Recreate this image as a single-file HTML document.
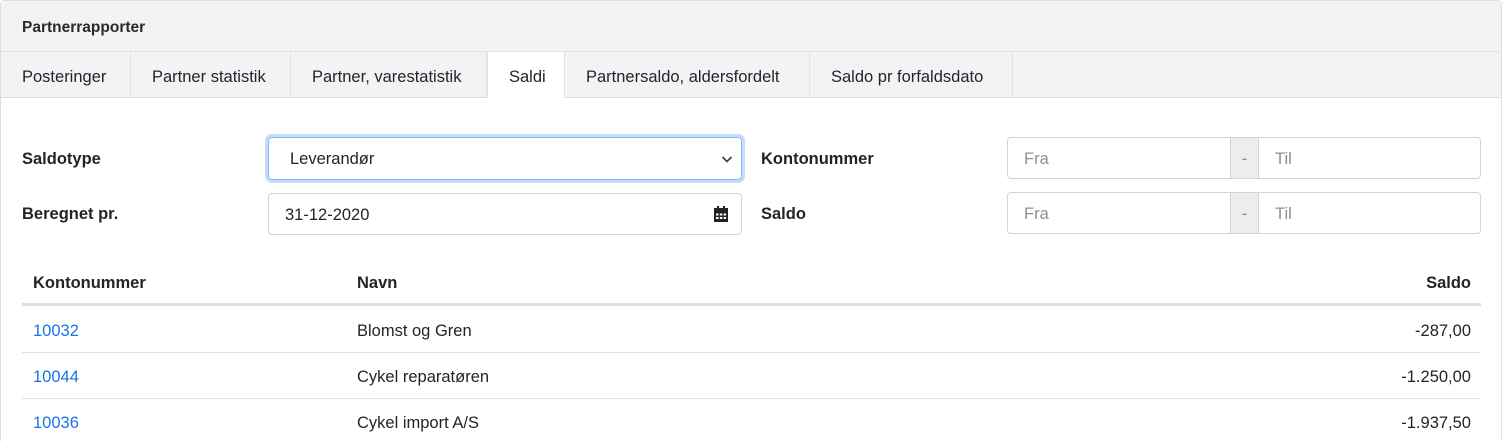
<!DOCTYPE html>
<html><head><meta charset="utf-8"><style>
*{box-sizing:border-box;margin:0;padding:0}
html,body{width:1505px;height:441px;overflow:hidden}
body{background:#fff;font-family:"Liberation Sans",sans-serif;font-size:16.5px;color:#212529;position:relative}
.a{position:absolute}
.card{left:0;top:0;width:1502px;height:460px;border:1px solid #dfdfdf;border-radius:4px}
.hdr{left:1px;top:1px;width:1500px;height:51px;background:#f2f3f5;border-bottom:1px solid #e2e2e2;font-size:15.5px;padding:18px 21px;font-weight:bold;color:#2a2a2a}
.tabs{left:1px;top:52px;width:1500px;height:46px;background:#f2f3f5;border-bottom:1px solid #dfdfdf}
.tab{position:absolute;top:0;height:46px;line-height:50px;padding-left:21px;border-right:1px solid #e3e3e3}
.lbl{font-weight:bold}
.inp{border:1px solid #ced4da;border-radius:4px;height:42px;line-height:43px;padding-left:16px}
.ph{color:#8a8f95}
.th{font-weight:bold;top:274px}
.ln{left:22px;width:1459px;height:1px;background:#dee2e6}
a{color:#1a73e8;text-decoration:none}
</style></head><body>
<div class="a card"></div>
<div class="a hdr">Partnerrapporter</div>
<div class="a tabs">
<div class="tab" style="left:0;width:130px">Posteringer</div>
<div class="tab" style="left:130px;width:160px">Partner statistik</div>
<div class="tab" style="left:290px;width:196px">Partner, varestatistik</div>
<div class="tab" style="left:486px;width:78px;background:#fff;height:46px;border-left:1px solid #e3e3e3">Saldi</div>
<div class="tab" style="left:564px;width:245px">Partnersaldo, aldersfordelt</div>
<div class="tab" style="left:809px;width:203px">Saldo pr forfaldsdato</div>
</div>

<div class="a lbl" style="left:22px;top:150px">Saldotype</div>
<div class="a lbl" style="left:22px;top:205px">Beregnet pr.</div>
<div class="a inp" style="left:268px;top:137px;width:474px;height:43px;border-color:#86b7fe;box-shadow:0 0 0 3px #c7dcfb;padding-left:21px">Leverandør
<svg class="a" style="right:8px;top:17px" width="12" height="9" viewBox="0 0 12 9"><path d="M1.5 2 L6 6.5 L10.5 2" fill="none" stroke="#343a40" stroke-width="1.6"/></svg></div>
<div class="a inp" style="left:268px;top:193px;width:474px">31-12-2020
<svg class="a" style="right:13px;top:12px" width="14" height="16" viewBox="0 0 14 16"><rect x="3" y="0" width="2" height="3" fill="#222"/><rect x="9" y="0" width="2" height="3" fill="#222"/><rect x="0" y="2" width="14" height="4" fill="#222"/><path d="M0 6h14v10H0z" fill="#222"/><g fill="#fff"><rect x="2" y="7.5" width="2.5" height="2"/><rect x="5.8" y="7.5" width="2.5" height="2"/><rect x="9.6" y="7.5" width="2.5" height="2"/><rect x="2" y="11" width="2.5" height="2"/><rect x="5.8" y="11" width="2.5" height="2"/><rect x="9.6" y="11" width="2.5" height="2"/></g></svg></div>

<div class="a lbl" style="left:761px;top:150px">Kontonummer</div>
<div class="a lbl" style="left:761px;top:205px">Saldo</div>

<div class="a inp ph" style="left:1007px;top:137px;width:224px;border-radius:4px 0 0 4px">Fra</div>
<div class="a inp ph" style="left:1230px;top:137px;width:29px;background:#eceded;padding:0;text-align:center;border-radius:0">-</div>
<div class="a inp ph" style="left:1258px;top:137px;width:223px;border-radius:0 4px 4px 0">Til</div>
<div class="a inp ph" style="left:1007px;top:192px;width:224px;border-radius:4px 0 0 4px">Fra</div>
<div class="a inp ph" style="left:1230px;top:192px;width:29px;background:#eceded;padding:0;text-align:center;border-radius:0">-</div>
<div class="a inp ph" style="left:1258px;top:192px;width:223px;border-radius:0 4px 4px 0">Til</div>

<div class="a th" style="left:33px">Kontonummer</div>
<div class="a th" style="left:357px">Navn</div>
<div class="a th" style="right:34px">Saldo</div>
<div class="a ln" style="top:303px;height:3px;background:#dcdfe2"></div>

<div class="a" style="left:33px;top:322px"><a>10032</a></div>
<div class="a" style="left:357px;top:322px">Blomst og Gren</div>
<div class="a" style="right:34px;top:322px">-287,00</div>
<div class="a ln" style="top:352px"></div>
<div class="a" style="left:33px;top:368px"><a>10044</a></div>
<div class="a" style="left:357px;top:368px">Cykel reparatøren</div>
<div class="a" style="right:34px;top:368px">-1.250,00</div>
<div class="a ln" style="top:398px"></div>
<div class="a" style="left:33px;top:414px"><a>10036</a></div>
<div class="a" style="left:357px;top:414px">Cykel import A/S</div>
<div class="a" style="right:34px;top:414px">-1.937,50</div>
</body></html>
